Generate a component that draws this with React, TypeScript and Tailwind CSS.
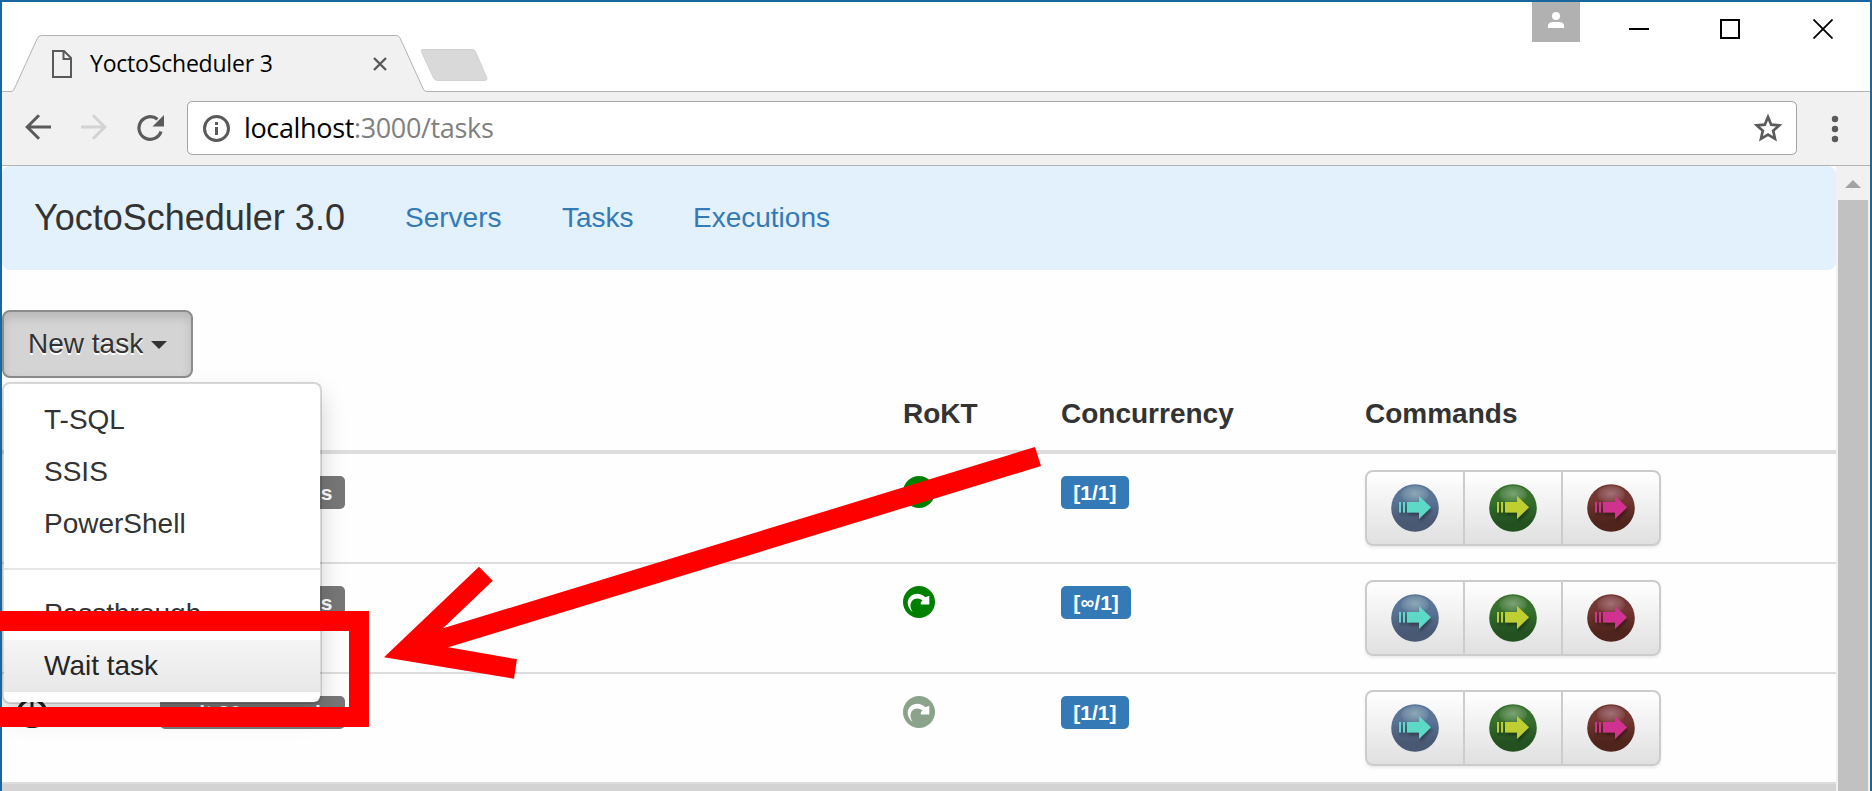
import { ReactNode } from "react";

function BrowserTabs() {
  return (
    <div className="relative flex h-[90px] shrink-0 bg-white">
      <svg className="absolute left-0 top-0" width="500" height="90" viewBox="2 2 500 90" fill="none">
        <path d="M2 91.5H11Q13 91.5 14 89.5L37.5 38Q38.7 35.5 41.5 35.5H396Q398.800 35.5 400 38L423.500 89.500Q424.500 91.500 427 91.500H502V93H2Z" fill="#f1f1f1" />
        <path d="M427 91.5H502V20H427Z" fill="#fff" />
        <path d="M2 91.5H11Q13 91.5 14 89.5L37.5 38Q38.7 35.5 41.5 35.5H396Q398.8 35.5 400 38L423.5 89.5Q424.500 91.500 427 91.500H502" stroke="#b3b3b3" />
        <path d="M423 49.500H472Q474.500 49.500 475.500 51.500L486.500 77Q488 80.500 484.500 80.500H437.500Q435 80.500 433.500 78L421.500 52Q420.500 49.500 423 49.500Z" fill="#d9d9d9" stroke="#cacaca" strokeWidth="0.8" />
      </svg>
      <div className="relative flex h-[36px] mt-[34px] ml-[50px] w-[335px] items-center">
        <svg className="mt-[20px]" width="20" height="28" viewBox="0 0 20 28" fill="none" stroke="#5a5a5a" strokeWidth="2">
          <path d="M1 1H12L19 8V27H1ZM11.500 1V9H19" />
        </svg>
        <span className="mt-[18px] ml-[18px] whitespace-nowrap font-['Open_Sans','Noto_Sans',sans-serif] text-[23px] leading-[32px] tracking-[-0.2px] text-black">YoctoScheduler 3</span>
        <svg className="ml-auto mt-[20px]" width="14" height="14" viewBox="0 0 14 14" stroke="#5a5a5a" strokeWidth="2.400">
          <path d="M1 1L13 13M13 1L1 13" />
        </svg>
      </div>
      <div className="relative ml-auto flex w-[338px] items-start border-b border-[#b3b3b3]">
        <div className="flex h-[40px] w-[48px] justify-center bg-[#b1b1b1] pt-[10px]">
          <svg width="16" height="16" viewBox="0 0 16 16" fill="#fff">
            <circle cx="8" cy="4" r="4" />
            <path d="M0 16V13.500C0 11 3 10 5 10H11C13 10 16 11 16 13.500V16Z" />
          </svg>
        </div>
        <svg className="ml-[49px] mt-[17px]" width="20" height="20" stroke="#000" strokeWidth="2">
          <path d="M0 10H20" />
        </svg>
        <svg className="ml-[71px] mt-[17px]" width="20" height="20" fill="none" stroke="#000" strokeWidth="2">
          <path d="M1 1H19V19H1Z" />
        </svg>
        <svg className="ml-[73px] mt-[17px]" width="20" height="20" stroke="#000" strokeWidth="1.800">
          <path d="M0.500 0.500L19.500 19.500M19.500 0.500L0.500 19.500" />
        </svg>
      </div>
      <div className="absolute bottom-0 left-[500px] right-[338px] h-px bg-[#b3b3b3]" />
    </div>
  );
}

function Toolbar() {
  return (
    <div className="flex h-[74px] shrink-0 items-start border-b border-[#b3b3b3] bg-[#f1f1f1] pt-[9px]">
      <svg className="ml-[23px] mt-[13px]" width="26" height="26" fill="none" stroke="#5a5a5a" strokeWidth="3">
        <path d="M26 13H2M14 1.200L2.200 13L14 24.800" />
      </svg>
      <svg className="ml-[30px] mt-[13px]" width="26" height="26" fill="none" stroke="#d3d3d3" strokeWidth="3">
        <path d="M0 13H24M12 1.200L23.800 13L12 24.800" />
      </svg>
      <svg className="ml-[30px] mt-[14px]" width="28" height="27" fill="none">
        <path d="M20.500 4.300A11.300 11.300 0 1 0 24 16.500" stroke="#5a5a5a" strokeWidth="3.200" />
        <path d="M27 0V11.500H15.500Z" fill="#5a5a5a" />
      </svg>
      <div className="ml-[22px] flex h-[54px] w-[1610px] items-center rounded-[5px] border border-[#a6a6a6] bg-white pl-[15px] pr-[13px]">
        <svg width="27" height="27" fill="none" stroke="#5a5a5a">
          <circle cx="13.500" cy="13.500" r="12" strokeWidth="3" />
          <path d="M13.500 12V20M13.500 7V10" strokeWidth="3" />
        </svg>
        <span className="ml-[14px] whitespace-nowrap font-['Open_Sans','Noto_Sans',sans-serif] text-[27px] leading-[36px] tracking-[-0.35px] text-black">
          localhost<span className="text-[#808080]">:3000/tasks</span>
        </span>
        <svg className="ml-auto" width="30" height="30" viewBox="0 0 30 30" fill="none" stroke="#5a5a5a" strokeWidth="2.700">
          <path d="M15 4L18.200 11.700L26.200 12.400L20.200 17.700L22 25.800L15 21.600L8 25.800L9.800 17.700L3.800 12.400L11.800 11.700Z" />
        </svg>
      </div>
      <svg className="ml-[34px] mt-[14px]" width="8" height="28" fill="#5a5a5a">
        <circle cx="4" cy="4" r="3.200" />
        <circle cx="4" cy="14" r="3.200" />
        <circle cx="4" cy="24" r="3.200" />
      </svg>
    </div>
  );
}

function RestartIcon({ enabled }: { enabled: boolean }) {
  return (
    <svg width="32" height="32" viewBox="0 0 32 32">
      <circle cx="16" cy="16" r="16" fill={enabled ? "#008000" : "#8aa38a"} />
      <path d="M9.800 26C4.500 22 3.300 15.500 6.500 11.500C10.500 6.500 18 6.500 22.300 11.300L26.300 9.800V18.500H17.800V16.200L19.500 14.600C16.500 11.700 11.800 11.800 9.200 14.800C6.700 17.700 7 22 9.800 26Z" fill="#fff" />
    </svg>
  );
}

const orbs = [
  { id: "blue", top: "#8fabb8", mid: "#5a7496", low: "#495873", arrow: "#5bd9c7" },
  { id: "green", top: "#7fa577", mid: "#37702d", low: "#235220", arrow: "#bfcf33" },
  { id: "red", top: "#a5737a", mid: "#733632", low: "#4f241c", arrow: "#d1338f" },
];

function OrbDefs() {
  return (
    <svg className="absolute h-0 w-0">
      <defs>
        {orbs.map((o) => (
          <linearGradient key={o.id} id={`orb-${o.id}`} x1="0" y1="0" x2="0" y2="1">
            <stop offset="0" stopColor={o.mid} />
            <stop offset="0.350" stopColor={o.mid} />
            <stop offset="0.800" stopColor={o.low} />
            <stop offset="1" stopColor={o.low} />
          </linearGradient>
        ))}
        {orbs.map((o) => (
          <radialGradient key={o.id} id={`gloss-${o.id}`} cx="0.5" cy="0.45" r="0.55">
            <stop offset="0" stopColor={o.top} stopOpacity="0.950" />
            <stop offset="0.600" stopColor={o.top} stopOpacity="0.500" />
            <stop offset="1" stopColor={o.top} stopOpacity="0.120" />
          </radialGradient>
        ))}
        <filter id="arrow-shadow" x="-20%" y="-20%" width="150%" height="160%">
          <feDropShadow dx="1" dy="3" stdDeviation="1.800" floodColor="#000" floodOpacity="0.350" />
        </filter>
      </defs>
    </svg>
  );
}

function CommandGroup() {
  return (
    <div className="flex h-[76px] w-[296px] overflow-hidden rounded-[8px] border-2 border-[#ccc] bg-linear-to-b from-white to-[#e0e0e0] shadow-[0_2px_3px_rgba(0,0,0,0.08)]">
      {orbs.map((o, i) => (
        <button key={o.id} className={i < 2 ? "flex w-[98px] shrink-0 items-start justify-center border-r-2 border-[#ccc] pt-[12px]" : "flex w-[96px] items-start justify-center pt-[12px]"}>
          <svg width="48" height="48" viewBox="0 0 48 48">
            <circle cx="24" cy="24" r="23.800" fill={`url(#orb-${o.id})`} />
            <ellipse cx="24" cy="10.500" rx="14" ry="9" fill={`url(#gloss-${o.id})`} />
            <path d="M8 18H10V28.500H8ZM12 18H14V28.500H12ZM16 18H28V12L40 23.300L28 35V28.500H16Z" fill={o.arrow} filter="url(#arrow-shadow)" />
          </svg>
        </button>
      ))}
    </div>
  );
}

function Label({ children, tone }: { children: ReactNode; tone: "blue" | "gray" }) {
  return (
    <span className={tone === "blue" ? "flex h-[33px] items-center rounded-[5px] bg-[#337ab7] px-[12.300px] text-[21px] font-bold leading-[21px] text-white" : "flex h-[33px] w-[185px] items-center justify-end whitespace-nowrap rounded-[5px] bg-[#777] px-[12.600px] text-[21px] font-bold leading-[21px] text-white"}>
      {children}
    </span>
  );
}

const tasks = [
  { label: "30 seconds", restart: true, running: "1", limit: "1" },
  { label: "30 seconds", restart: true, running: "∞", limit: "1" },
  { label: "wait 30 seconds", restart: false, running: "1", limit: "1" },
];

function TaskTable() {
  return (
    <div>
      <div className="grid h-[76px] grid-cols-[158px_743px_157px_304px_1fr] border-b-4 border-[#ddd] pt-[16px] font-bold leading-[40px]">
        <span />
        <span />
        <span>RoKT</span>
        <span className="pl-px">Concurrency</span>
        <span className="pl-px">Commands</span>
      </div>
      {tasks.map((t, i) => (
        <div key={i} className="grid h-[110px] grid-cols-[158px_743px_158px_304px_1fr] items-start border-b-2 border-[#ddd] pt-[16px]">
          <svg className="ml-[14px] mt-[6px]" width="32" height="32" fill="none" stroke="#222" strokeWidth="3.500">
            <circle cx="16" cy="17" r="13.500" />
            <path d="M16 5V17L22 20" strokeWidth="3" />
          </svg>
          <div className="flex pt-[6px]">
            <Label tone="gray">{t.label}</Label>
          </div>
          <div className="pt-[6px]">
            <RestartIcon enabled={t.restart} />
          </div>
          <div className="flex pt-[6px]">
            <Label tone="blue">
              [<span className={t.running === "∞" ? "w-[14px] text-center text-[19px]" : ""}>{t.running}</span>/{t.limit}]
            </Label>
          </div>
          <CommandGroup />
        </div>
      ))}
    </div>
  );
}

function NewTaskMenu() {
  const item = "flex h-[52px] items-center pl-[40px] leading-[40px]";
  return (
    <div className="absolute left-0 top-[72px] z-10 w-[320px] rounded-[8px] border-2 border-black/15 bg-white bg-clip-padding py-[10px] shadow-[0_12px_24px_rgba(0,0,0,0.175)]">
      <div className={item}>T-SQL</div>
      <div className={item}>SSIS</div>
      <div className={item}>PowerShell</div>
      <div className="my-[18px] h-[2px] bg-[#e5e5e5]" />
      <div className={item}>Passthrough</div>
      <div className="flex h-[52px] items-center bg-linear-to-b from-[#f5f5f5] to-[#e8e8e8] pl-[40px] leading-[40px] text-[#262626]">Wait task</div>
    </div>
  );
}

function Annotation() {
  return (
    <svg className="pointer-events-none absolute left-0 top-0 z-20" width="1872" height="791" fill="#f00">
      <path d="M0 611H369V727H0V707H349V631H0Z" />
      <path d="M384 657.300L479 566.700L492.800 580.700L443 628.300L1035 447L1041 466L448.300 647.300L517 659.300L514 678.700Z" />
    </svg>
  );
}

export default function App() {
  return (
    <div className="relative h-[791px] w-[1872px] overflow-hidden">
      <div className="flex h-[791px] flex-col overflow-hidden border-x-2 border-t-2 border-[#1867a1] bg-white">
        <BrowserTabs />
        <Toolbar />
        <div className="flex min-h-0 flex-1 overflow-hidden">
          <main className="w-[1834px] shrink-0 bg-[#fefefe] font-['Liberation_Sans',Arial,sans-serif] text-[28px] text-[#333]">
            <nav className="flex h-[104px] items-center rounded-[8px] bg-[#e3f1fc]">
              <span className="ml-[32px] w-[371px] text-[36px]">YoctoScheduler 3.0</span>
              <a className="w-[157px] text-[#337ab7]">Servers</a>
              <a className="w-[131px] text-[#337ab7]">Tasks</a>
              <a className="text-[#337ab7]">Executions</a>
            </nav>
            <div className="relative mt-[40px] h-[68px]">
              <button className="flex h-[68px] w-[191px] items-center rounded-[8px] border-2 border-[#8c8c8c] bg-[#d4d4d4] pl-[24px] shadow-[inset_0_6px_10px_rgba(0,0,0,0.125)] [text-shadow:0_2px_0_#fff]">
                New task
                <svg className="ml-[8px] mt-[2px]" width="16" height="8" fill="#333">
                  <path d="M0 0H16L8 8Z" />
                </svg>
              </button>
              <NewTaskMenu />
            </div>
            <TaskTable />
            <div className="h-[8px] bg-[#d3d3d3]" />
            <OrbDefs />
          </main>
          <div className="flex w-[34px] flex-col items-center bg-[#f1f1f1]">
            <svg className="mt-[14px]" width="16" height="8" fill="#a3a3a3">
              <path d="M0 8L8 0L16 8Z" />
            </svg>
            <div className="mt-[12px] w-[30px] flex-1 bg-[#c1c1c1]" />
          </div>
        </div>
      </div>
      <Annotation />
    </div>
  );
}
